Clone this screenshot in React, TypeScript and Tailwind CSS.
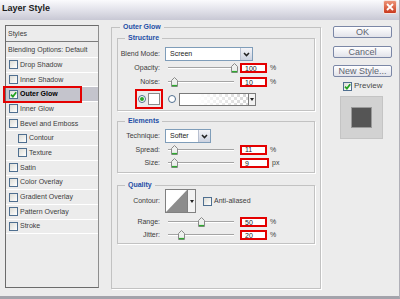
import React from "react";

const font = "font-['Liberation_Sans',Arial,sans-serif]";

function Check({ checked = false }: { checked?: boolean }) {
  return (
    <span className="flex h-[9px] w-[9px] shrink-0 items-center justify-center border border-[#4f6f90] bg-linear-to-br from-[#dcdcd6] to-white">
      {checked && (
        <svg viewBox="0 0 7 7" className="h-[7px] w-[7px]">
          <path d="M1 3.6 L2.9 5.6 L6.2 1.2" fill="none" stroke="#21a121" strokeWidth="1.7" />
        </svg>
      )}
    </span>
  );
}

function Radio({ on = false }: { on?: boolean }) {
  return (
    <span className="flex h-[8px] w-[8px] shrink-0 items-center justify-center rounded-full border border-[#4f6f90] bg-white">
      {on && <span className="h-[4px] w-[4px] rounded-full bg-[#2aa52a]" />}
    </span>
  );
}

function Chevron() {
  return (
    <svg width="7" height="5" viewBox="0 0 7 5">
      <path d="M1 1 L3.5 3.6 L6 1" fill="none" stroke="#222" strokeWidth="1.5" />
    </svg>
  );
}

function Tri() {
  return (
    <svg width="4" height="3" viewBox="0 0 4 3">
      <path d="M0 0 H4 L2 3 Z" fill="#222" />
    </svg>
  );
}

function Select({ value, className }: { value: string; className: string }) {
  return (
    <div className={`flex h-[14px] items-center border border-[#7f9db9] bg-white ${className}`}>
      <span className="flex-1 pl-[4px] text-[#222]">{value}</span>
      <span className="flex h-full w-[12px] items-center justify-center border-l border-[#b8c0d0] bg-linear-to-b from-[#f4f4f8] to-[#ccd2e0]">
        <Chevron />
      </span>
    </div>
  );
}

function Thumb({ left }: { left: number }) {
  return (
    <svg
      width="7"
      height="10"
      viewBox="0 0 7 10"
      className="absolute top-[1px]"
      style={{ left }}
    >
      <path d="M0.5 3.5 L3.5 0.5 L6.5 3.5 V9.5 H0.5 Z" fill="#eef0ee" stroke="#8a8a8a" />
      <path d="M1 8.6 H6" stroke="#2fa82f" strokeWidth="1.4" />
    </svg>
  );
}

function Field({ value, className = "w-[27px]" }: { value: string; className?: string }) {
  return (
    <div className={`flex h-[10px] items-center border-2 border-[#e40000] bg-white pl-[3px] leading-none text-[#222] ${className}`}>
      {value}
    </div>
  );
}

function SliderRow({
  label,
  value,
  pos,
  unit = "%",
  className = "h-[14px]",
  fieldClass,
}: {
  label: string;
  value: string;
  pos: number;
  unit?: string;
  className?: string;
  fieldClass?: string;
}) {
  return (
    <div className={`flex items-center ${className}`}>
      <span className="w-[42px] text-right">{label}</span>
      <div className="relative ml-[5px] flex h-[12px] w-[75px] items-center pl-[3px] pr-[6px]">
        <div className="h-[2px] w-full border-t border-b border-t-[#a4a4a4] border-b-white" />
        <Thumb left={3 + pos * 66 - 3.5} />
      </div>
      <Field value={value} className={fieldClass} />
      <span className="ml-[3px]">{unit}</span>
    </div>
  );
}

const styleItems: { name: string; indent?: boolean; active?: boolean }[] = [
  { name: "Drop Shadow" },
  { name: "Inner Shadow" },
  { name: "Outer Glow", active: true },
  { name: "Inner Glow" },
  { name: "Bevel and Emboss" },
  { name: "Contour", indent: true },
  { name: "Texture", indent: true },
  { name: "Satin" },
  { name: "Color Overlay" },
  { name: "Gradient Overlay" },
  { name: "Pattern Overlay" },
  { name: "Stroke" },
];

const groupBox = "border border-[#c2c2c2] shadow-[1px_1px_0_#fff]";
const legendCls = "ml-[7px] px-[3px] text-[7px] font-bold leading-[8px] text-[#1d4ea6]";

function Button({ children }: { children: React.ReactNode }) {
  return (
    <div className="flex h-[12px] items-center justify-center rounded-[2px] border border-[#7b87a6] bg-linear-to-b from-white to-[#e2e3ea] text-[9px] leading-none text-[#5e6470]">
      {children}
    </div>
  );
}

export default function App() {
  return (
    <div
      className={`flex h-[299px] w-[400px] flex-col overflow-hidden border-r border-b-[3px] border-r-[#b0b0b8] border-b-[#a3a3ab] bg-[#ececec] text-[7px] leading-[8px] text-[#3c3c3c] ${font}`}
    >
      {/* title bar */}
      <div className="flex h-[20px] shrink-0 items-start justify-between bg-linear-to-b from-[#fbfbfd] via-[#e2e2ea] to-[#c8c8d4] pl-[2px] pr-[2px]">
        <span className="mt-[3px] text-[9px] font-bold leading-[11px] text-[#1c1c1c]">Layer Style</span>
        <span className="flex h-[14px] w-[14px] items-center justify-center rounded-[2px] border border-[#f4e4e0] bg-linear-to-b from-[#ec9276] to-[#c9361a]">
          <svg width="8" height="8" viewBox="0 0 8 8">
            <path d="M1 1 L7 7 M7 1 L1 7" stroke="#fff" strokeWidth="1.8" />
          </svg>
        </span>
      </div>

      <div className="flex flex-1 pl-[5px] pt-[5px]">
        {/* styles list */}
        <div className="flex h-[263px] w-[94px] shrink-0 flex-col border border-[#6b6b6b] border-r-[#8e8e8e]">
          <div className="flex h-[16px] items-center border-b border-[#7c7c7c] pl-[2px]">Styles</div>
          <div className="flex h-[16px] items-center border-b border-white pl-[2px]">Blending Options: Default</div>
          {styleItems.map((it) => (
            <div
              key={it.name}
              className={`relative flex h-[14.7px] items-center gap-[2px] border-b border-white ${
                it.indent ? "pl-[12px]" : "pl-[3px]"
              } ${it.active ? "bg-[#c4c4cc] font-bold text-black" : ""}`}
            >
              <Check checked={it.active} />
              <span>{it.name}</span>
              {it.active && (
                <span className="absolute -left-[3px] -top-[1px] h-[17px] w-[79px] border-2 border-[#e40000]" />
              )}
            </div>
          ))}
        </div>

        {/* outer glow */}
        <fieldset className={`-mt-[2px] ml-[12px] h-[266px] w-[210px] shrink-0 ${groupBox}`}>
          <legend className={`${legendCls} ml-[8px]`}>Outer Glow</legend>
          <div className="px-[5px] pt-[3px]">
            <fieldset className={groupBox}>
              <legend className={legendCls}>Structure</legend>
              <div className="pb-[1px] pt-[5px]">
                <div className="flex h-[14px] items-center">
                  <span className="w-[42px] text-right">Blend Mode:</span>
                  <Select value="Screen" className="ml-[5px] w-[88px]" />
                </div>
                <SliderRow label="Opacity:" value="100" pos={1} />
                <SliderRow label="Noise:" value="10" pos={0.1} />
                <div className="flex h-[20px] items-center pl-[17px]">
                  <div className="flex h-[20px] w-[28px] items-center gap-[2px] border-2 border-[#e40000] pl-[1px]">
                    <Radio on />
                    <span className="h-[12px] w-[12px] border border-[#8a8a8a] bg-white" />
                  </div>
                  <span className="ml-[5px]">
                    <Radio />
                  </span>
                  <div className="ml-[3px] flex h-[13px] w-[77px] border border-[#7a7a7a] bg-white">
                    <div className="flex-1 bg-[image:linear-gradient(to_right,#fff_25%,rgba(255,255,255,0)),repeating-conic-gradient(#d6d6d6_0_25%,#fff_0_50%)] bg-[length:100%_100%,6px_6px]" />
                    <div className="flex w-[7px] items-center justify-center border-l border-[#7a7a7a] bg-[#f2f2f2]">
                      <Tri />
                    </div>
                  </div>
                </div>
              </div>
            </fieldset>

            <fieldset className={`mt-[6px] ${groupBox}`}>
              <legend className={legendCls}>Elements</legend>
              <div className="pb-[2px] pt-[4px]">
                <div className="flex h-[14px] items-center">
                  <span className="w-[42px] text-right">Technique:</span>
                  <Select value="Softer" className="ml-[5px] w-[46px]" />
                </div>
                <SliderRow label="Spread:" value="11" pos={0.1} className="h-[13px]" />
                <SliderRow label="Size:" value="9" pos={0.1} unit="px" fieldClass="w-[29px]" />
              </div>
            </fieldset>

            <fieldset className={`mt-[8px] ${groupBox}`}>
              <legend className={legendCls}>Quality</legend>
              <div className="pb-[2px]">
                <div className="flex h-[24px] items-center">
                  <span className="w-[42px] text-right">Contour:</span>
                  <div className="ml-[5px] flex h-[24px] border border-[#808080] bg-white">
                    <svg width="21" height="22" viewBox="0 0 21 22" className="block">
                      <path d="M0 22 L21 0 L21 22 Z" fill="#8c8c8c" />
                    </svg>
                    <div className="flex w-[8px] items-center justify-center border-l border-[#808080] bg-[#f2f2f2]">
                      <Tri />
                    </div>
                  </div>
                  <span className="ml-[7px]">
                    <Check />
                  </span>
                  <span className="ml-[2px]">Anti-aliased</span>
                </div>
                <SliderRow label="Range:" value="50" pos={0.5} className="mt-[2px] h-[14px]" />
                <SliderRow label="Jitter:" value="20" pos={0.2} className="h-[12px]" />
              </div>
            </fieldset>
          </div>
        </fieldset>

        {/* buttons */}
        <div className="ml-[12px] mt-[1px] flex w-[59px] shrink-0 flex-col">
          <Button>OK</Button>
          <div className="mt-[8px]">
            <Button>Cancel</Button>
          </div>
          <div className="mt-[7px]">
            <Button>New Style...</Button>
          </div>
          <div className="mt-[3px] flex h-[12px] items-center pl-[10px] text-[8px] text-[#4a4a4a]">
            <Check checked />
            <span className="ml-[2px]">Preview</span>
          </div>
          <div className="ml-[7px] mt-[4px] flex h-[43px] w-[43px] items-center justify-center border border-[#c4c4c4] bg-[#d2d2d2]">
            <span className="h-[21px] w-[21px] border border-[#9a9a9a] bg-[#555555]" />
          </div>
        </div>
      </div>
    </div>
  );
}
